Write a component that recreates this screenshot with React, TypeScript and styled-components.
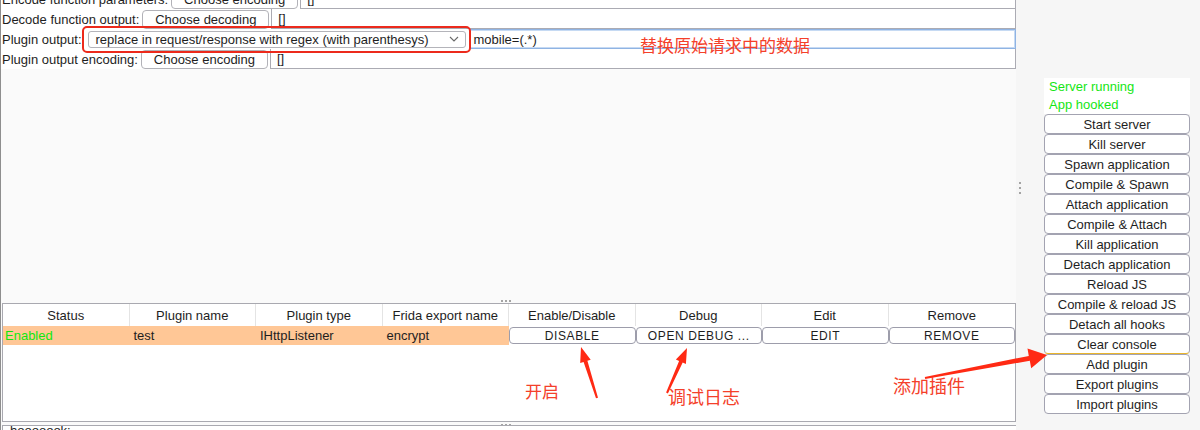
import React from 'react'
import styled, { createGlobalStyle } from 'styled-components'

const GlobalStyle = createGlobalStyle`
  html, body {
    margin: 0;
    padding: 0;
  }
  body {
    width: 1200px;
    height: 430px;
    overflow: hidden;
    background: #f6f6f6;
    font-family: 'Liberation Sans', Arial, sans-serif;
    font-size: 13px;
    color: #1e1e1e;
  }
`

const Window = styled.div`
  position: relative;
  display: flex;
  width: 1200px;
  height: 430px;
  overflow: hidden;
`

const LeftPane = styled.div`
  width: 1015px;
  display: flex;
  flex-direction: column;
  border-left: 1px solid #8e8e8e;
  background: #fafafa;
  & > * {
    flex-shrink: 0;
  }
`

const Form = styled.div`
  margin-top: -11px;
  background: #fff;
  display: flex;
  flex-direction: column;
`

const FormRow = styled.div`
  display: flex;
  align-items: center;
  height: 20px;
`

const Label = styled.span`
  padding: 0 3px 0 1px;
  white-space: nowrap;
`

const ChooseButton = styled.button`
  box-sizing: border-box;
  width: 127px;
  height: 19px;
  margin-right: 2px;
  padding: 0;
  border: 1px solid #b2b2b8;
  border-radius: 4px;
  background: #fff;
  font: inherit;
  color: #1e1e1e;
`

const Field = styled.div<{ focused?: boolean }>`
  box-sizing: border-box;
  flex: 1;
  align-self: stretch;
  display: flex;
  align-items: center;
  padding-left: ${(p) => (p.focused ? '4px' : '6px')};
  background: #fff;
  border: 1px solid ${(p) => (p.focused ? '#8fb3e3' : '#ababb3')};
  border-top: ${(p) => (p.focused ? '1px solid #8fb3e3' : 'none')};
  box-shadow: ${(p) => (p.focused ? 'inset 0 0 0 1px #c6daf3' : 'none')};
`

const SelectWrap = styled.div`
  position: relative;
  margin: 0 3px 0 3px;
`

const Select = styled.div`
  box-sizing: border-box;
  width: 378px;
  height: 17px;
  display: flex;
  align-items: center;
  justify-content: space-between;
  padding: 0 6px 0 7px;
  border: 1px solid #b4b4ba;
  border-radius: 3px;
  background: #fff;
  white-space: nowrap;
`

const RedFrame = styled.div`
  position: absolute;
  left: -6px;
  right: -5px;
  top: -5px;
  bottom: -5px;
  border: 2.5px solid #ec2a1c;
  border-radius: 5px;
  pointer-events: none;
`

const EmptyArea = styled.div`
  height: 229px;
  background: #fafafa;
`

const HGrip = styled.div`
  height: 5px;
  display: flex;
  justify-content: center;
  align-items: center;
  gap: 2px;
  padding-right: 6px;
`

const Dot = styled.span`
  width: 2px;
  height: 2px;
  background: #a4a4a4;
`

const TablePanel = styled.div`
  box-sizing: border-box;
  height: 119px;
  margin-left: 1px;
  border: 1px solid #a9a9b0;
  background: #fff;
`

const TableRow = styled.div<{ head?: boolean }>`
  display: grid;
  grid-template-columns: repeat(8, 1fr);
  height: ${(p) => (p.head ? '22px' : '19px')};
  align-items: stretch;
`

const HeadCell = styled.div`
  display: flex;
  align-items: center;
  justify-content: center;
  border-right: 1px solid #e4e4e4;
  &:last-child {
    border-right: none;
  }
`

const DataCell = styled.div<{ green?: boolean }>`
  display: flex;
  align-items: center;
  padding-left: ${(p) => (p.green ? '2px' : '4px')};
  background: #ffc796;
  color: ${(p) => (p.green ? '#0fe80f' : '#1e1e1e')};
`

const CellButton = styled.button`
  box-sizing: border-box;
  margin: 1px 0 0 0;
  height: 17px;
  padding: 0;
  border: 1px solid #9d9dab;
  border-radius: 4px;
  background: #fff;
  font-family: 'Liberation Sans', Arial, sans-serif;
  font-size: 12px;
  letter-spacing: 0.6px;
  color: #1e1e1e;
  white-space: nowrap;
`

const BottomPanel = styled.div`
  height: 30px;
  margin: -2px 0 0 1px;
  border-top: 1px solid #a9a9b0;
  border-left: 1px solid #a9a9b0;
  background: #fff;
  padding: 0 0 0 7px;
  line-height: 10px;
`

const VGrip = styled.div`
  width: 7px;
  display: flex;
  flex-direction: column;
  align-items: center;
  justify-content: center;
  gap: 3px;
  padding-bottom: 55px;
`

const RightPane = styled.div`
  flex: 1;
  padding: 78px 10px 0 21px;
  display: flex;
  flex-direction: column;
  & > * {
    flex-shrink: 0;
  }
`

const StatusBox = styled.div`
  height: 36px;
  background: #fff;
  padding: 0 5px;
  display: flex;
  flex-direction: column;
  justify-content: center;
  color: #14e614;
  line-height: 18px;
`

const SideButton = styled.button<{ marked?: boolean }>`
  box-sizing: border-box;
  height: 20px;
  padding: 0;
  border: 1px solid #a3a3b1;
  border-bottom-color: ${(p) => (p.marked ? '#e9b52c' : '#a3a3b1')};
  border-radius: 4px;
  background: #fff;
  font: inherit;
  color: #1e1e1e;
`

const Note = styled.span<{ x: number; y: number; size: number }>`
  position: absolute;
  left: ${(p) => p.x}px;
  top: ${(p) => p.y}px;
  font-family: 'Noto Sans CJK SC', sans-serif;
  font-size: ${(p) => p.size}px;
  line-height: 1;
  color: #f4402a;
  white-space: nowrap;
  pointer-events: none;
`

const ArrowLayer = styled.svg`
  position: absolute;
  left: 0;
  top: 0;
  pointer-events: none;
`

function arrowPoints(
  x1: number,
  y1: number,
  x2: number,
  y2: number,
  tailW: number,
  shaftW: number,
  headLen: number,
  headW: number
) {
  const len = Math.hypot(x2 - x1, y2 - y1)
  const ux = (x2 - x1) / len
  const uy = (y2 - y1) / len
  const nx = -uy
  const ny = ux
  const bx = x2 - ux * headLen
  const by = y2 - uy * headLen
  const pts = [
    [x1 + (nx * tailW) / 2, y1 + (ny * tailW) / 2],
    [bx + (nx * shaftW) / 2, by + (ny * shaftW) / 2],
    [bx + (nx * headW) / 2, by + (ny * headW) / 2],
    [x2, y2],
    [bx - (nx * headW) / 2, by - (ny * headW) / 2],
    [bx - (nx * shaftW) / 2, by - (ny * shaftW) / 2],
    [x1 - (nx * tailW) / 2, y1 - (ny * tailW) / 2],
  ]
  return pts.map((p) => `${p[0].toFixed(1)},${p[1].toFixed(1)}`).join(' ')
}

const sideButtons = [
  'Start server',
  'Kill server',
  'Spawn application',
  'Compile & Spawn',
  'Attach application',
  'Compile & Attach',
  'Kill application',
  'Detach application',
  'Reload JS',
  'Compile & reload JS',
  'Detach all hooks',
  'Clear console',
  'Add plugin',
  'Export plugins',
  'Import plugins',
]

const headers = [
  'Status',
  'Plugin name',
  'Plugin type',
  'Frida export name',
  'Enable/Disable',
  'Debug',
  'Edit',
  'Remove',
]

const Chevron = () => (
  <svg width="10" height="6" viewBox="0 0 10 6">
    <polyline points="1,1 5,5 9,1" fill="none" stroke="#6a6a6a" strokeWidth="1.1" />
  </svg>
)

export default function App() {
  return (
    <Window>
      <GlobalStyle />
      <LeftPane>
        <Form>
          <FormRow>
            <Label>Encode function parameters:</Label>
            <ChooseButton>Choose encoding</ChooseButton>
            <Field>[]</Field>
          </FormRow>
          <FormRow>
            <Label>Decode function output:</Label>
            <ChooseButton>Choose decoding</ChooseButton>
            <Field>[]</Field>
          </FormRow>
          <FormRow>
            <Label>Plugin output:</Label>
            <SelectWrap>
              <Select>
                <span>replace in request/response with regex (with parenthesys)</span>
                <Chevron />
              </Select>
              <RedFrame />
            </SelectWrap>
            <Field focused>mobile=(.*)</Field>
          </FormRow>
          <FormRow>
            <Label>Plugin output encoding:</Label>
            <ChooseButton>Choose encoding</ChooseButton>
            <Field>[]</Field>
          </FormRow>
        </Form>
        <EmptyArea />
        <HGrip>
          <Dot />
          <Dot />
          <Dot />
        </HGrip>
        <TablePanel>
          <TableRow head>
            {headers.map((h) => (
              <HeadCell key={h}>{h}</HeadCell>
            ))}
          </TableRow>
          <TableRow>
            <DataCell green>Enabled</DataCell>
            <DataCell>test</DataCell>
            <DataCell>IHttpListener</DataCell>
            <DataCell>encrypt</DataCell>
            <CellButton>DISABLE</CellButton>
            <CellButton>OPEN DEBUG ...</CellButton>
            <CellButton>EDIT</CellButton>
            <CellButton>REMOVE</CellButton>
          </TableRow>
        </TablePanel>
        <HGrip>
          <Dot />
          <Dot />
          <Dot />
        </HGrip>
        <BottomPanel>hooooook:</BottomPanel>
      </LeftPane>
      <VGrip>
        <Dot />
        <Dot />
        <Dot />
      </VGrip>
      <RightPane>
        <StatusBox>
          <span>Server running</span>
          <span>App hooked</span>
        </StatusBox>
        {sideButtons.map((b) => (
          <SideButton key={b} marked={b === 'Clear console'}>
            {b}
          </SideButton>
        ))}
      </RightPane>

      <Note x={640} y={36} size={17}>替换原始请求中的数据</Note>
      <Note x={525} y={382} size={17}>开启</Note>
      <Note x={668} y={387} size={18}>调试日志</Note>
      <Note x={893} y={376} size={18}>添加插件</Note>

      <ArrowLayer width="1200" height="430" viewBox="0 0 1200 430">
        <g fill="#ff2a14">
          <polygon points={arrowPoints(597, 398, 581, 347, 2, 4, 15, 11)} />
          <polygon points={arrowPoints(667, 393, 687, 348, 2, 4, 15, 11)} />
          <polygon points={arrowPoints(925, 378, 1047, 355, 2, 5, 18, 20)} />
        </g>
      </ArrowLayer>
    </Window>
  )
}
